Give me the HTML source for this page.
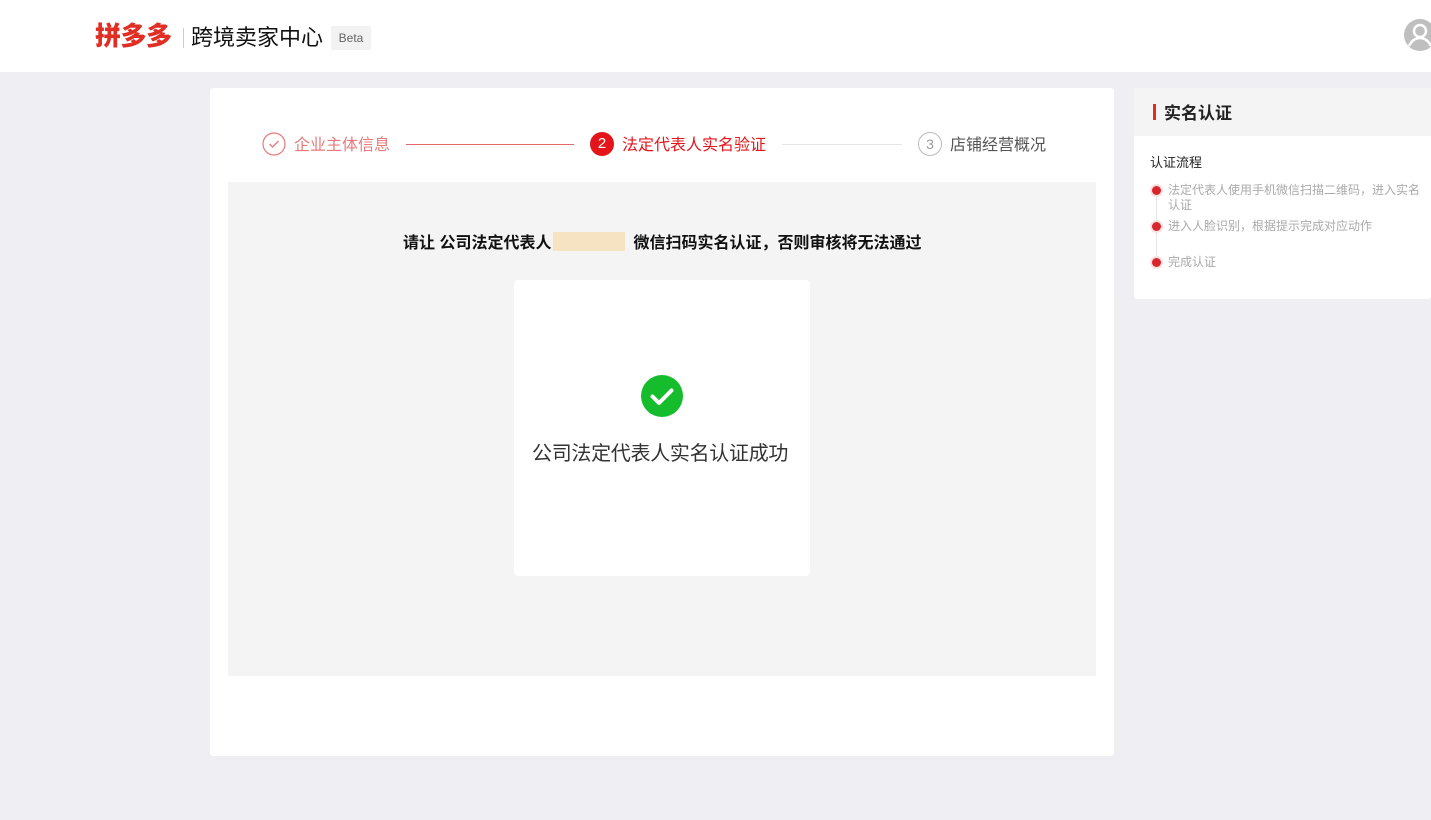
<!DOCTYPE html>
<html><head><meta charset="utf-8"><style>
*{margin:0;padding:0;box-sizing:border-box}
body{width:1431px;height:820px;background:#efeff3;font-family:"Liberation Sans","Noto Sans CJK SC",sans-serif;position:relative;overflow:hidden}
.hdr{position:absolute;left:0;top:0;width:1431px;height:72px;background:#fff}
.a{position:absolute;white-space:nowrap}
</style></head><body>
<div class="hdr">
 <div class="a" style="left:95px;top:21px;font-size:26px;line-height:30px;font-weight:900;color:#e02e24;letter-spacing:-0.5px">拼多多</div>
 <div class="a" style="left:183px;top:28px;width:1px;height:20px;background:#ccc"></div>
 <div class="a" style="left:191px;top:24px;font-size:22px;line-height:28px;color:#111">跨境卖家中心</div>
 <div class="a" style="left:331px;top:26px;width:40px;height:24px;background:#f2f2f2;border-radius:2px;font-size:12px;color:#666;text-align:center;line-height:24px">Beta</div>
 <svg class="a" style="left:1403px;top:18px" width="34" height="34" viewBox="0 0 34 34"><circle cx="17" cy="17" r="16" fill="#bfbfbf"/><circle cx="17" cy="13" r="6" fill="none" stroke="#fff" stroke-width="2.5"/><path d="M6 28c3-6 7-8 11-8s8 2 11 8" fill="none" stroke="#fff" stroke-width="2.5"/></svg>
</div>
<div class="a" style="left:210px;top:88px;width:904px;height:668px;background:#fff;border-radius:3px"></div>
<svg class="a" style="left:262px;top:132px" width="24" height="24"><circle cx="12" cy="12" r="11" fill="none" stroke="#e8787a" stroke-width="1.2"/><path d="M7.5 12l3 3 6-6" fill="none" stroke="#e8787a" stroke-width="1.3"/></svg>
<div class="a" style="left:294px;top:131px;font-size:16px;color:#e8787a">企业主体信息</div>
<div class="a" style="left:406px;top:144px;width:168px;height:1px;background:#e8676a"></div>
<div class="a" style="left:590px;top:132px;width:24px;height:24px;border-radius:50%;background:#e4141a;color:#fff;font-size:15px;text-align:center;line-height:24px">2</div>
<div class="a" style="left:622px;top:131px;font-size:16px;color:#e4141a">法定代表人实名验证</div>
<div class="a" style="left:782px;top:144px;width:120px;height:1px;background:#e6e6e6"></div>
<div class="a" style="left:918px;top:132px;width:24px;height:24px;border-radius:50%;border:1px solid #bbb;color:#999;font-size:14px;text-align:center;line-height:22px">3</div>
<div class="a" style="left:950px;top:131px;font-size:16px;color:#555">店铺经营概况</div>
<div class="a" style="left:228px;top:182px;width:868px;height:494px;background:#f4f4f4"></div>
<div class="a" style="left:403px;top:229px;font-size:16px;font-weight:bold;color:#111">请让 公司法定代表人<span style="display:inline-block;width:72px;height:19px;background:#f5dfb5;vertical-align:-3px;margin:0 8px 0 2px;opacity:.8"></span>微信扫码实名认证，否则审核将无法通过</div>
<div class="a" style="left:514px;top:280px;width:296px;height:296px;background:#fff;border-radius:4px"></div>
<svg class="a" style="left:641px;top:375px" width="42" height="42"><circle cx="21" cy="21" r="21" fill="#15bd2c"/><path d="M11.5 21.5l6.5 6.5 12.5-12.5" fill="none" stroke="#fff" stroke-width="4" stroke-linecap="round" stroke-linejoin="round"/></svg>
<div class="a" style="left:532px;top:437px;font-size:20px;color:#333;letter-spacing:-0.3px">公司法定代表人实名认证成功</div>
<div class="a" style="left:1134px;top:88px;width:297px;height:211px;background:#fff;border-radius:3px"></div>
<div class="a" style="left:1134px;top:88px;width:297px;height:48px;background:#f4f4f4"></div>
<div class="a" style="left:1153px;top:104px;width:3px;height:16px;background:#e02e24"></div>
<div class="a" style="left:1164px;top:99px;font-size:17px;font-weight:bold;color:#222">实名认证</div>
<div class="a" style="left:1150px;top:152px;font-size:13px;color:#222">认证流程</div>
<div class="a" style="left:1156px;top:192px;width:1px;height:70px;background:#e5e5e5"></div>
<div class="a" style="left:1152px;top:186px;width:9px;height:9px;border-radius:50%;background:#d9262c;box-shadow:0 0 0 2px #fbe0e0"></div>
<div class="a" style="left:1152px;top:222px;width:9px;height:9px;border-radius:50%;background:#d9262c;box-shadow:0 0 0 2px #fbe0e0"></div>
<div class="a" style="left:1152px;top:258px;width:9px;height:9px;border-radius:50%;background:#d9262c;box-shadow:0 0 0 2px #fbe0e0"></div>
<div class="a" style="left:1168px;top:183px;font-size:12px;line-height:15px;color:#aaa;white-space:normal;width:258px">法定代表人使用手机微信扫描二维码，进入实名认证</div>
<div class="a" style="left:1168px;top:219px;font-size:12px;line-height:15px;color:#aaa">进入人脸识别，根据提示完成对应动作</div>
<div class="a" style="left:1168px;top:255px;font-size:12px;line-height:15px;color:#aaa">完成认证</div>
</body></html>
